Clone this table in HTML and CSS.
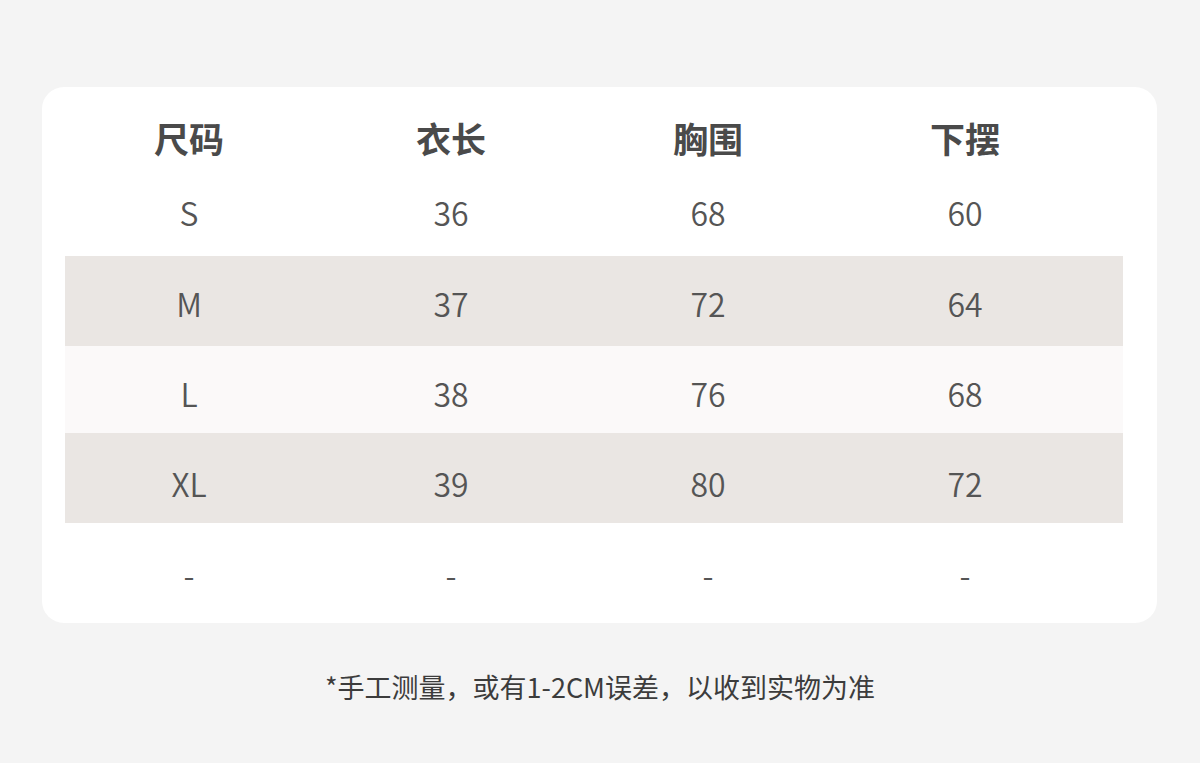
FILE: index.html
```html
<!DOCTYPE html>
<html lang="zh-CN">
<head>
<meta charset="utf-8">
<title>尺码表</title>
<link rel="stylesheet" href="styles.css">
</head>
<body>
<div class="card">
  <div class="table">
    <div class="row head">
      <div>尺码</div><div>衣长</div><div>胸围</div><div>下摆</div><div></div>
    </div>
    <div class="row r-s">
      <div>S</div><div>36</div><div>68</div><div>60</div><div></div>
    </div>
    <div class="row shade r-m">
      <div>M</div><div>37</div><div>72</div><div>64</div><div></div>
    </div>
    <div class="row light r-l">
      <div>L</div><div>38</div><div>76</div><div>68</div><div></div>
    </div>
    <div class="row shade r-xl">
      <div>XL</div><div>39</div><div>80</div><div>72</div><div></div>
    </div>
    <div class="row r-dash">
      <div>-</div><div>-</div><div>-</div><div>-</div><div></div>
    </div>
  </div>
</div>
<p class="note">*手工测量，或有1-2CM误差，以收到实物为准</p>
</body>
</html>
```
FILE: styles.css
```css
html, body {
  margin: 0;
  padding: 0;
  background: #f4f4f4;
}
body {
  width: 1200px;
  height: 763px;
  overflow: hidden;
  font-family: "Noto Sans CJK SC", "Noto Sans", sans-serif;
}
.card {
  margin: 87px 0 0 42px;
  width: 1115px;
  height: 536px;
  box-sizing: border-box;
  background: #ffffff;
  border-radius: 22px;
  padding: 18px 34px 0 23px;
}
.table {
  display: flex;
  flex-direction: column;
}
.row {
  display: grid;
  grid-template-columns: 248px 276px 238px 276px 20px;
  align-items: center;
  text-align: center;
  color: #555555;
  font-size: 32px;
  font-weight: 350;
  box-sizing: border-box;
}
.head {
  height: 65px;
  font-size: 35px;
  font-weight: 700;
  color: #4a4a4a;
}
.r-s { height: 86px; padding-bottom: 3px; }
.r-m { height: 90px; padding-top: 3px; }
.r-l { height: 87px; padding-top: 7px; }
.r-xl { height: 90px; padding-top: 10px; }
.r-dash { height: 100px; padding-top: 1px; }
.shade { background: #eae6e3; }
.light { background: #fbf9f9; }
.note {
  margin: 49px 0 0;
  text-align: center;
  font-size: 27px;
  font-weight: 400;
  color: #3c3c3c;
  line-height: 30px;
}
```
